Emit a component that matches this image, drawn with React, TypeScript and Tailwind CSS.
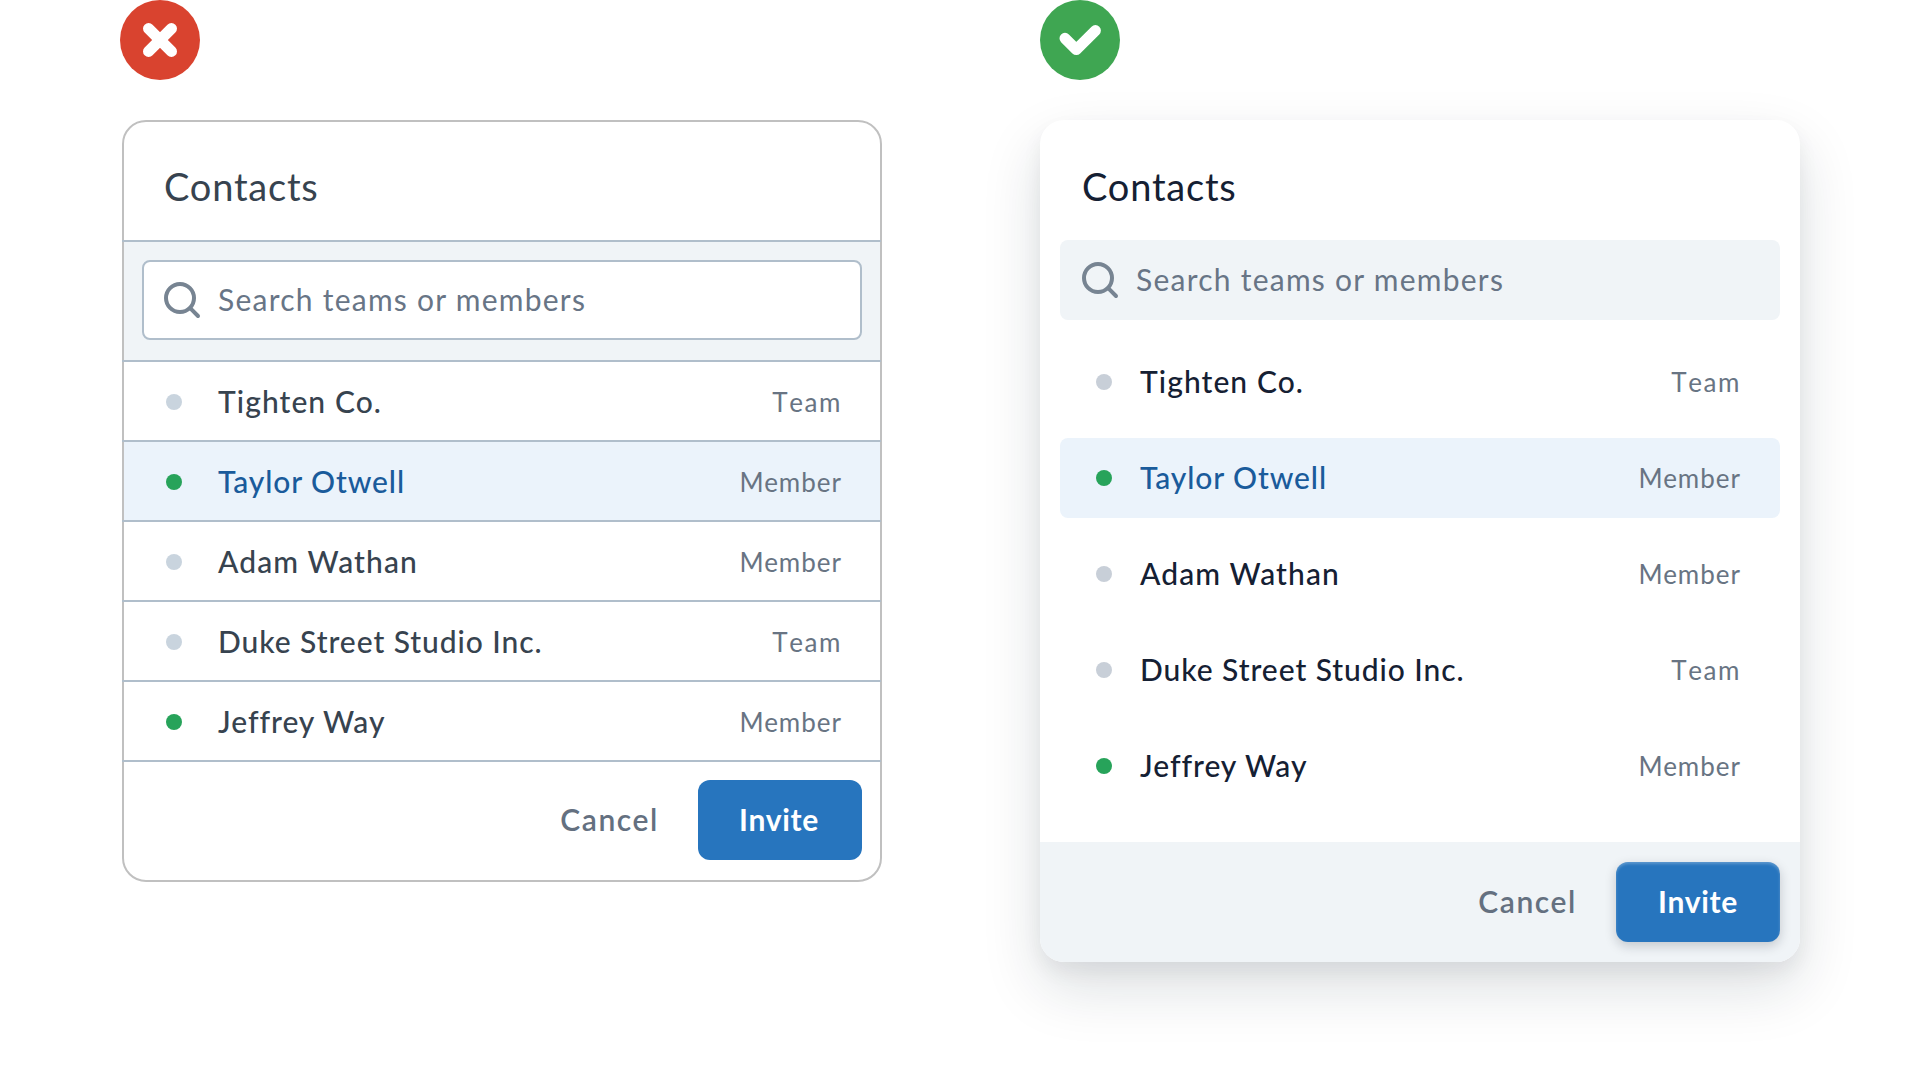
import React from "react";
import clsx from "clsx";

type Contact = {
  name: string;
  role: "Team" | "Member";
  online?: boolean;
  selected?: boolean;
  tracking: string;
};

const contacts: Contact[] = [
  { name: "Tighten Co.", role: "Team", tracking: "tracking-[1.08px]" },
  { name: "Taylor Otwell", role: "Member", online: true, selected: true, tracking: "tracking-[0.9px]" },
  { name: "Adam Wathan", role: "Member", tracking: "tracking-[1.12px]" },
  { name: "Duke Street Studio Inc.", role: "Team", tracking: "tracking-[0.94px]" },
  { name: "Jeffrey Way", role: "Member", online: true, tracking: "tracking-[0.98px]" },
];

function SearchIcon() {
  return (
    <svg className="size-10 shrink-0" viewBox="0 0 40 40" fill="none" stroke="#778492" strokeWidth="4" strokeLinecap="round">
      <circle cx="18" cy="18" r="14" />
      <path d="M28.2 28.2 36 36" />
    </svg>
  );
}

function CrossBadge() {
  return (
    <svg className="size-20" viewBox="0 0 80 80" fill="none">
      <circle cx="40" cy="40" r="40" fill="#d9432f" />
      <path d="M28.6 28.6 51.4 51.4M51.4 28.6 28.6 51.4" stroke="#fff" strokeWidth="11.2" strokeLinecap="round" />
    </svg>
  );
}

function CheckBadge() {
  return (
    <svg className="size-20" viewBox="0 0 80 80" fill="none">
      <circle cx="40" cy="40" r="40" fill="#3fa652" />
      <path d="M25 38.3 36.3 49.6 55.4 30.6" stroke="#fff" strokeWidth="11" strokeLinecap="round" strokeLinejoin="round" />
    </svg>
  );
}

function Rule() {
  return <div className="-mr-px -ml-0.5 h-0.5 bg-[#b0becb]" />;
}

function Role({ role, className }: { role: Contact["role"]; className?: string }) {
  return (
    <span
      className={clsx(
        "ml-auto text-[26px] leading-8 text-[#687483]",
        role === "Team" ? "tracking-[1.6px] [font-kerning:none]" : "tracking-[1px]",
        className,
      )}
    >
      {role}
    </span>
  );
}

function SearchText() {
  return <span className="pb-0.5 text-[30px] leading-9 tracking-[1.25px] text-[#687586]">Search teams or members</span>;
}

function CancelButton() {
  return <button className="pb-0.5 text-[30px] leading-9 font-semibold tracking-[1.6px] text-[#647080]">Cancel</button>;
}

function InviteButton({ raised }: { raised?: boolean }) {
  return (
    <button
      className={clsx(
        "flex h-20 w-[164px] items-center justify-center rounded-xl bg-[#2775be] pb-0.5 text-[30px] leading-9 font-bold tracking-[0.7px] text-white",
        raised ? "shadow-[0_4px_12px_rgba(16,24,40,0.2),inset_0_2px_3px_rgba(255,255,255,0.25)]" : "pr-0.5",
      )}
    >
      Invite
    </button>
  );
}

function BorderedCard() {
  return (
    <section className="ml-0.5 w-[760px] rounded-3xl border-2 border-[#c0c0c0] bg-white">
      <h2 className="flex h-[118px] items-center pt-[10px] pl-10 text-[38px] leading-[46px] tracking-[0.8px] text-[#37434f]">
        Contacts
      </h2>
      <Rule />
      <div className="h-[118px] bg-[#f0f4f7] px-[18px] pt-[18px]">
        <div className="flex h-20 items-center gap-4 rounded-lg border-2 border-[#b0becb] bg-white pl-[18px]">
          <SearchIcon />
          <SearchText />
        </div>
      </div>
      {contacts.map((c) => (
        <React.Fragment key={c.name}>
          <Rule />
          <div className={clsx("flex h-[78px] items-center pr-[38px] pl-[42px]", c.selected && "bg-[#ebf3fb]")}>
            <span className={clsx("mt-0.5 size-4 rounded-full", c.online ? "bg-[#27a35a]" : "bg-[#c9d4de]")} />
            <span
              className={clsx(
                "ml-9 text-[30px] leading-9 font-medium",
                c.tracking,
                c.selected ? "text-[#1a5b9b]" : "text-[#37434f]",
              )}
            >
              {c.name}
            </span>
            <Role role={c.role} className="pt-0.5" />
          </div>
        </React.Fragment>
      ))}
      <Rule />
      <div className="flex h-[118px] items-center justify-end gap-[39px] pr-[18px] pb-0.5">
        <CancelButton />
        <InviteButton />
      </div>
    </section>
  );
}

function ShadowCard() {
  return (
    <section className="w-[760px] overflow-hidden rounded-3xl bg-white shadow-[0_26px_60px_rgba(16,32,48,0.14),0_10px_20px_rgba(16,24,36,0.06)]">
      <h2 className="flex h-[120px] items-center pt-3 pl-[42px] text-[38px] leading-[46px] tracking-[0.8px] text-[#152033]">
        Contacts
      </h2>
      <div className="mx-5 flex h-20 items-center gap-4 rounded-lg bg-[#f0f4f7] pl-5">
        <SearchIcon />
        <SearchText />
      </div>
      <div className="flex flex-col gap-4 px-5 pt-[22px] pb-9">
        {contacts.map((c) => (
          <div
            key={c.name}
            className={clsx("flex h-20 items-center rounded-lg pr-[39px] pl-9", c.selected && "bg-[#ebf3fb]")}
          >
            <span className={clsx("size-4 rounded-full", c.online ? "bg-[#27a35a]" : "bg-[#c8cfd8]")} />
            <span
              className={clsx(
                "ml-7 pb-0.5 text-[30px] leading-9 font-medium",
                c.tracking,
                c.selected ? "text-[#1a5b9b]" : "text-[#152033]",
              )}
            >
              {c.name}
            </span>
            <Role role={c.role} />
          </div>
        ))}
      </div>
      <div className="flex h-[120px] items-center justify-end gap-[39px] bg-[#f0f4f7] pr-5">
        <CancelButton />
        <InviteButton raised />
      </div>
    </section>
  );
}

export default function App() {
  return (
    <main className="flex h-[1080px] w-[1920px] items-start gap-[158px] overflow-hidden bg-white pl-[120px] font-['Lato',sans-serif]">
      <div className="flex flex-col gap-10">
        <CrossBadge />
        <BorderedCard />
      </div>
      <div className="flex flex-col gap-10">
        <CheckBadge />
        <ShadowCard />
      </div>
    </main>
  );
}
